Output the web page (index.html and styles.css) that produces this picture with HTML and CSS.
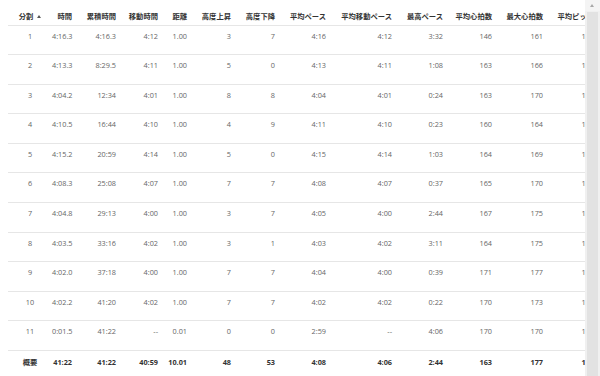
FILE: index.html
```html
<!DOCTYPE html>
<html lang="ja">
<head>
    <meta charset="UTF-8">
    <meta name="viewport" content="width=device-width, initial-scale=1.0">
    <title>ラップ</title>
    <link rel="stylesheet" href="styles.css">
</head>
<body>
    <div class="laps">
        <div class="laps-view">
            <table class="lap-table">
                <colgroup>
                    <col class="c-lap">
                    <col class="c-time">
                    <col class="c-total">
                    <col class="c-moving">
                    <col class="c-dist">
                    <col class="c-gain">
                    <col class="c-loss">
                    <col class="c-pace">
                    <col class="c-mpace">
                    <col class="c-best">
                    <col class="c-hr">
                    <col class="c-maxhr">
                    <col class="c-cad">
                </colgroup>
                <thead>
                    <tr>
                        <th class="lap-no">分割 <span class="sort"></span></th>
                        <th>時間</th>
                        <th>累積時間</th>
                        <th>移動時間</th>
                        <th>距離</th>
                        <th>高度上昇</th>
                        <th>高度下降</th>
                        <th>平均ペース</th>
                        <th>平均移動ペース</th>
                        <th>最高ペース</th>
                        <th>平均心拍数</th>
                        <th>最大心拍数</th>
                        <th>平均ピッチ</th>
                    </tr>
                </thead>
                <tbody>
                    <tr><td class="lap-no">1</td><td>4:16.3</td><td>4:16.3</td><td>4:12</td><td>1.00</td><td>3</td><td>7</td><td>4:16</td><td>4:12</td><td>3:32</td><td>146</td><td>161</td><td>180</td></tr>
                    <tr><td class="lap-no">2</td><td>4:13.3</td><td>8:29.5</td><td>4:11</td><td>1.00</td><td>5</td><td>0</td><td>4:13</td><td>4:11</td><td>1:08</td><td>163</td><td>166</td><td>182</td></tr>
                    <tr><td class="lap-no">3</td><td>4:04.2</td><td>12:34</td><td>4:01</td><td>1.00</td><td>8</td><td>8</td><td>4:04</td><td>4:01</td><td>0:24</td><td>163</td><td>170</td><td>183</td></tr>
                    <tr><td class="lap-no">4</td><td>4:10.5</td><td>16:44</td><td>4:10</td><td>1.00</td><td>4</td><td>9</td><td>4:11</td><td>4:10</td><td>0:23</td><td>160</td><td>164</td><td>181</td></tr>
                    <tr><td class="lap-no">5</td><td>4:15.2</td><td>20:59</td><td>4:14</td><td>1.00</td><td>5</td><td>0</td><td>4:15</td><td>4:14</td><td>1:03</td><td>164</td><td>169</td><td>180</td></tr>
                    <tr><td class="lap-no">6</td><td>4:08.3</td><td>25:08</td><td>4:07</td><td>1.00</td><td>7</td><td>7</td><td>4:08</td><td>4:07</td><td>0:37</td><td>165</td><td>170</td><td>182</td></tr>
                    <tr><td class="lap-no">7</td><td>4:04.8</td><td>29:13</td><td>4:00</td><td>1.00</td><td>3</td><td>7</td><td>4:05</td><td>4:00</td><td>2:44</td><td>167</td><td>175</td><td>183</td></tr>
                    <tr><td class="lap-no">8</td><td>4:03.5</td><td>33:16</td><td>4:02</td><td>1.00</td><td>3</td><td>1</td><td>4:03</td><td>4:02</td><td>3:11</td><td>164</td><td>175</td><td>183</td></tr>
                    <tr><td class="lap-no">9</td><td>4:02.0</td><td>37:18</td><td>4:00</td><td>1.00</td><td>7</td><td>7</td><td>4:04</td><td>4:00</td><td>0:39</td><td>171</td><td>177</td><td>184</td></tr>
                    <tr><td class="lap-no">10</td><td>4:02.2</td><td>41:20</td><td>4:02</td><td>1.00</td><td>7</td><td>7</td><td>4:02</td><td>4:02</td><td>0:22</td><td>170</td><td>173</td><td>184</td></tr>
                    <tr><td class="lap-no">11</td><td>0:01.5</td><td>41:22</td><td>--</td><td>0.01</td><td>0</td><td>0</td><td>2:59</td><td>--</td><td>4:06</td><td>170</td><td>170</td><td>150</td></tr>
                </tbody>
                <tfoot>
                    <tr><td class="lap-no">概要</td><td>41:22</td><td>41:22</td><td>40:59</td><td>10.01</td><td>48</td><td>53</td><td>4:08</td><td>4:06</td><td>2:44</td><td>163</td><td>177</td><td>182</td></tr>
                </tfoot>
            </table>
        </div>
        <!-- fake vertical scrollbar -->
        <div class="scrollbar">
            <div class="scroll-up"></div>
            <div class="scroll-thumb"></div>
        </div>
    </div>
</body>
</html>
```

FILE: styles.css
```css
body {
    margin: 0;
    background: #fff;
    font-family: "Open Sans", "Noto Sans CJK JP", sans-serif;
}

.laps {
    display: flex;
    width: 600px;
    height: 376px;
    overflow: hidden;
}

.laps-view {
    flex: 1;
    overflow: hidden;
    padding-left: 8px;
}

.lap-table {
    width: 592px;
    table-layout: fixed;
    border-collapse: collapse;
    font-size: 7.3px;
    line-height: 12px;
    white-space: nowrap;
}

/* column widths */
.c-lap { width: 44px; }
.c-time { width: 26px; }
.c-total { width: 44px; }
.c-moving { width: 42px; }
.c-dist { width: 29px; }
.c-gain { width: 44px; }
.c-loss { width: 44px; }
.c-pace { width: 51px; }
.c-mpace { width: 66px; }
.c-best { width: 51px; }
.c-hr { width: 49px; }
.c-maxhr { width: 51px; }
.c-cad { width: 51px; }

.lap-table th,
.lap-table td {
    padding: 0 6px 0 0;
    text-align: right;
    overflow: visible;
}

.lap-table th {
    padding-top: 10px;
    padding-bottom: 2.5px;
    color: #333;
    font-weight: bold;
    border-bottom: 1px solid #e6e6e6;
}

.lap-table tbody td {
    padding-top: 4px;
    padding-bottom: 12.6px;
    color: #666;
    border-bottom: 1px solid #e6e6e6;
}

.lap-table tfoot td {
    padding-top: 5px;
    padding-bottom: 10px;
    color: #333;
    font-weight: bold;
}

.lap-table .lap-no {
    text-align: center;
    padding-right: 0;
}

.sort {
    display: inline-block;
    width: 0;
    height: 0;
    margin-left: 2px;
    vertical-align: 1px;
    border-left: 2px solid transparent;
    border-right: 2px solid transparent;
    border-bottom: 3px solid #555;
}

.scrollbar {
    width: 15px;
    display: flex;
    flex-direction: column;
    background: #f0f0f0;
}

.scroll-up {
    height: 11px;
    position: relative;
    background: #f4f4f4;
}

.scroll-up::before {
    content: '';
    position: absolute;
    top: 4px;
    left: 5px;
    width: 0;
    height: 0;
    border-left: 2.5px solid transparent;
    border-right: 2.5px solid transparent;
    border-bottom: 3px solid #a8a8a8;
}

.scroll-thumb {
    flex: 1;
    margin: 1px 2px 0;
    background: #e2e2e2;
}
```
